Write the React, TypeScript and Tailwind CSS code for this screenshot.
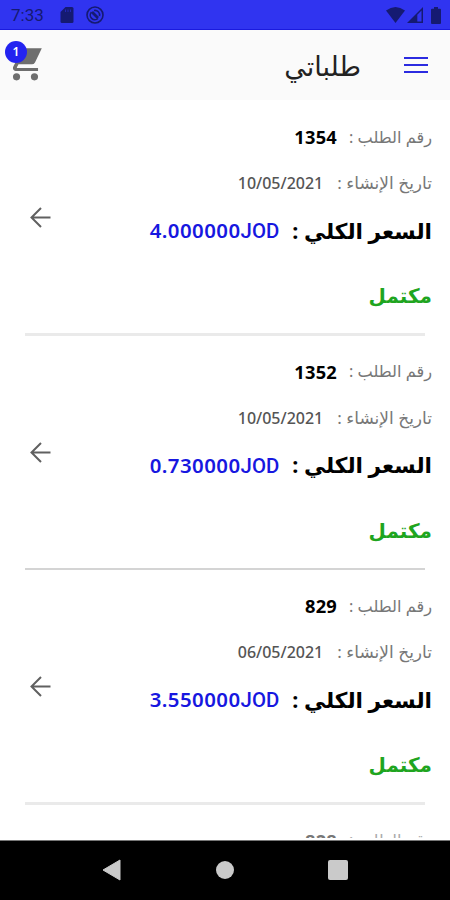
import React from 'react';

type Order = {
  id: string;
  date: string;
  total: string;
  currency: string;
};

const orders: Order[] = [
  { id: '1354', date: '10/05/2021', total: '4.000000', currency: 'JOD' },
  { id: '1352', date: '10/05/2021', total: '0.730000', currency: 'JOD' },
  { id: '829', date: '06/05/2021', total: '3.550000', currency: 'JOD' },
];

const StatusBar = () => (
  <div className="flex h-[30px] shrink-0 items-center justify-between border-b border-[#1a1adf] bg-[#3034f0] pt-[1px] pr-[9px] pl-[11px] text-[#151a72]">
    <div className="flex items-center">
      <span className="w-[49px] font-['Roboto',sans-serif] text-[17px] leading-none">7:33</span>
      <svg className="h-[16px] w-[14px]" viewBox="0 0 13 16" fill="currentColor">
        <path d="M5 0H11.5Q13 0 13 1.500V14.500Q13 16 11.500 16H1.500Q0 16 0 14.500V5Z" />
        <path d="M5 2.500V5M7.500 2.500V5M10 2.500V5" stroke="#2226b8" />
      </svg>
      <svg className="ml-[12px] h-[18px] w-[18px]" viewBox="0 0 18 18" fill="none" stroke="currentColor">
        <circle cx="9" cy="9" r="8" strokeWidth="1.600" />
        <path d="M5.500 6A4.600 4.600 0 0 0 12 12.500M8 4.500A4.600 4.600 0 0 1 13.500 10" strokeWidth="1.600" />
        <path d="M6 6L12 12" strokeWidth="2.800" />
      </svg>
    </div>
    <div className="flex items-center">
      <svg className="h-[16px] w-[19px]" viewBox="0 0 19 16" fill="currentColor">
        <path d="M0 3.500Q9.500-3.500 19 3.500L9.500 16Z" />
      </svg>
      <svg className="ml-[2px] h-[16px] w-[16px]" viewBox="0 0 16 16" fill="currentColor">
        <path fillRule="evenodd" d="M16 0V16H0ZM14.500 3.500L10.300 7.700V14.500H14.500Z" />
      </svg>
      <svg className="ml-[8px] h-[17px] w-[10px]" viewBox="0 0 10 17" fill="currentColor">
        <path d="M3 0H7V1.700H9Q10 1.700 10 2.700V16Q10 17 9 17H1Q0 17 0 16V2.700Q0 1.700 1 1.700H3Z" />
      </svg>
    </div>
  </div>
);

const Header = () => (
  <header className="flex h-[70px] shrink-0 items-center justify-between bg-[#fafafa] pr-[22px] pl-[4px]">
    <div className="relative h-[48px] w-[43px]">
      <svg className="h-[43px] w-[43px]" viewBox="0 0 24 24" fill="#6e6e6e">
        <path d="M3 4H21.100L17.300 11.970Q16.700 13 15.550 13H8.100L7.200 14.630V15H19V16.800H7C5.500 16.800 4.500 15.400 5.250 14.040L6.600 11.590Z" />
        <circle cx="7" cy="20" r="2" />
        <circle cx="17" cy="20" r="2" />
      </svg>
      <span className="absolute top-0 left-[1px] flex h-[22px] w-[22px] items-center justify-center rounded-full bg-[#2323f0] font-['Noto_Sans',sans-serif] text-[12px] font-semibold text-white">
        1
      </span>
    </div>
    <div className="flex items-center">
      <h1 className="mr-[43px] text-[27px] leading-none text-[#222]">طلباتي</h1>
      <svg className="h-[18px] w-[24px]" viewBox="0 0 24 18" stroke="#2b2be0" strokeWidth="2">
        <path d="M0 2H24M0 9H24M0 16H24" />
      </svg>
    </div>
  </header>
);

const OrderRow = ({ order }: { order: Order }) => (
  <li className="group flex h-[234.5px] shrink-0 flex-col">
    <div className="flex h-[233px] items-start justify-between pr-[18px] pl-[30px]" dir="ltr">
      <svg className="mt-[107px] h-[21px] w-[21px]" viewBox="0 0 21 21" fill="none" stroke="#606060" strokeWidth="2">
        <path d="M20.500 10.500H2M11 1L1.500 10.500L11 20" />
      </svg>
      <div className="flex flex-col pt-[14px] whitespace-nowrap" dir="rtl">
        <div className="flex h-[46px] items-center">
          <span className="text-[16.2px] text-[#777]">رقم الطلب :</span>
          <span className="mr-[12px] text-[18.3px] font-bold tracking-[0.2px] text-black">{order.id}</span>
        </div>
        <div className="flex h-[46px] items-center">
          <span className="text-[17px] text-[#777]">تاريخ الإنشاء :</span>
          <span className="mr-[14px] text-[16px] font-medium text-[#555]" dir="ltr">{order.date}</span>
        </div>
        <div className="flex h-[50px] items-center">
          <span className="text-[21.700px] font-bold text-black">السعر الكلي :</span>
          <span className="mr-[13px] flex items-baseline text-[20.400px] font-semibold text-[#1717e0]" dir="ltr">
            <span className="tracking-[0.45px]">{order.total}</span>
            <span className="font-['Roboto',sans-serif] font-medium">{order.currency}</span>
          </span>
        </div>
        <div className="flex h-[80px] items-center">
          <span className="text-[20px] font-bold text-[#1fa51f]">مكتمل</span>
        </div>
      </div>
    </div>
    <div className="mx-[25px] -mt-[0.5px] h-[3px] shrink-0 bg-[#eaeaea] group-even:mt-0 group-even:h-[2px] group-even:bg-[#d4d4d4]" />
  </li>
);

const NavBar = () => (
  <nav className="flex h-[60px] shrink-0 items-center justify-between border-t border-[#777] bg-black px-[102px] pb-[1px]">
    <svg className="h-[22px] w-[20px]" viewBox="0 0 20 22" fill="#cacaca">
      <path d="M18 1V21L1 11Z" stroke="#cacaca" strokeLinejoin="round" />
    </svg>
    <div className="h-[18px] w-[18px] rounded-full bg-[#cacaca]" />
    <div className="h-[20px] w-[20px] rounded-[2px] bg-[#cacaca]" />
  </nav>
);

const App = () => {
  return (
    <div className="flex h-[900px] w-[450px] flex-col overflow-hidden bg-white font-['Noto_Sans','DejaVu_Sans',sans-serif]">
      <StatusBar />
      <Header />
      <ul className="mb-[2px] flex min-h-0 flex-1 flex-col overflow-hidden">
        {orders.map((order) => (
          <OrderRow key={order.id} order={order} />
        ))}
        {/* Next order, only its first line peeks in */}
        <li className="flex h-[46px] shrink-0 items-center pt-[28px] pr-[18px]" dir="rtl">
          <span className="text-[16.2px] text-[#aaa]">رقم الطلب :</span>
          <span className="mr-[12px] text-[18.3px] font-bold tracking-[0.2px] text-[#777]">828</span>
        </li>
      </ul>
      <NavBar />
    </div>
  );
};

export default App;
